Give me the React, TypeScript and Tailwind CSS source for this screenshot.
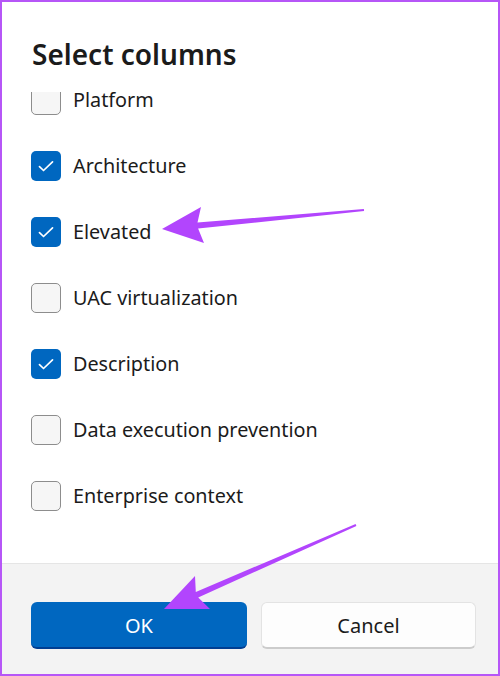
import React from "react";

const items = [
  { label: "Platform", checked: false },
  { label: "Architecture", checked: true },
  { label: "Elevated", checked: true },
  { label: "UAC virtualization", checked: false },
  { label: "Description", checked: true },
  { label: "Data execution prevention", checked: false },
  { label: "Enterprise context", checked: false },
];

function Checkbox({ checked }: { checked: boolean }) {
  if (checked) {
    return (
      <div className="flex h-[30px] w-[30px] shrink-0 items-center justify-center rounded-[5px] bg-[#0067c0]">
        <svg width="18" height="18" viewBox="0 0 16 16" fill="none">
          <path d="M2.2 8.6l3.6 3.4 8-7.6" stroke="white" strokeWidth="1.5" strokeLinecap="round" strokeLinejoin="round" />
        </svg>
      </div>
    );
  }
  return <div className="h-[30px] w-[30px] shrink-0 rounded-[5px] border-[1.5px] border-[#8d8d8d] bg-[#f6f6f6]" />;
}

function Arrows() {
  return (
    <svg className="pointer-events-none absolute inset-0" width="500" height="676" viewBox="0 0 500 676">
      <polygon
        fill="#b245fd"
        points="160,227 199,205 195.5,220.6 361.9,207 362.1,209 196.1,226.6 202,241"
      />
      <polygon
        fill="#b245fd"
        points="162,607 193,574 193.8,589.9 353.6,522.1 354.4,523.9 196.2,595.4 208,607"
      />
    </svg>
  );
}

export default function App() {
  return (
    <div
      className="relative flex h-[676px] w-[500px] flex-col overflow-hidden border-2 border-[#b656f7] bg-white text-[#1b1b1b]"
      style={{ fontFamily: '"Noto Sans", "Open Sans", sans-serif' }}
    >
      <div className="h-[90px] shrink-0 pl-[30px] pt-[34px]">
        <h1 className="text-[28px] font-semibold leading-[36px]">Select columns</h1>
      </div>

      <div className="h-[471px] shrink-0 overflow-hidden">
        <div className="-mt-[7px] flex flex-col gap-[36px] pl-[29px]">
          {items.map((item) => (
            <div key={item.label} className="flex h-[30px] items-center gap-[12px]">
              <Checkbox checked={item.checked} />
              <span className="text-[19.8px] leading-none">{item.label}</span>
            </div>
          ))}
        </div>
      </div>

      <div className="flex flex-1 gap-[14px] border-t border-[#e5e5e5] bg-[#f3f3f3] pl-[29px] pt-[38px]">
        <button className="h-[47px] w-[216px] rounded-[6px] border-b-2 border-[#003e92] bg-[#0067c0] pt-[2px] text-[20px] text-white">
          OK
        </button>
        <button className="h-[47px] w-[215px] rounded-[6px] border border-b-2 border-[#e3e3e3] border-b-[#cccccc] bg-[#fdfdfd] pt-[2px] text-[20px] text-[#1b1b1b]">
          Cancel
        </button>
      </div>

      <Arrows />
    </div>
  );
}
